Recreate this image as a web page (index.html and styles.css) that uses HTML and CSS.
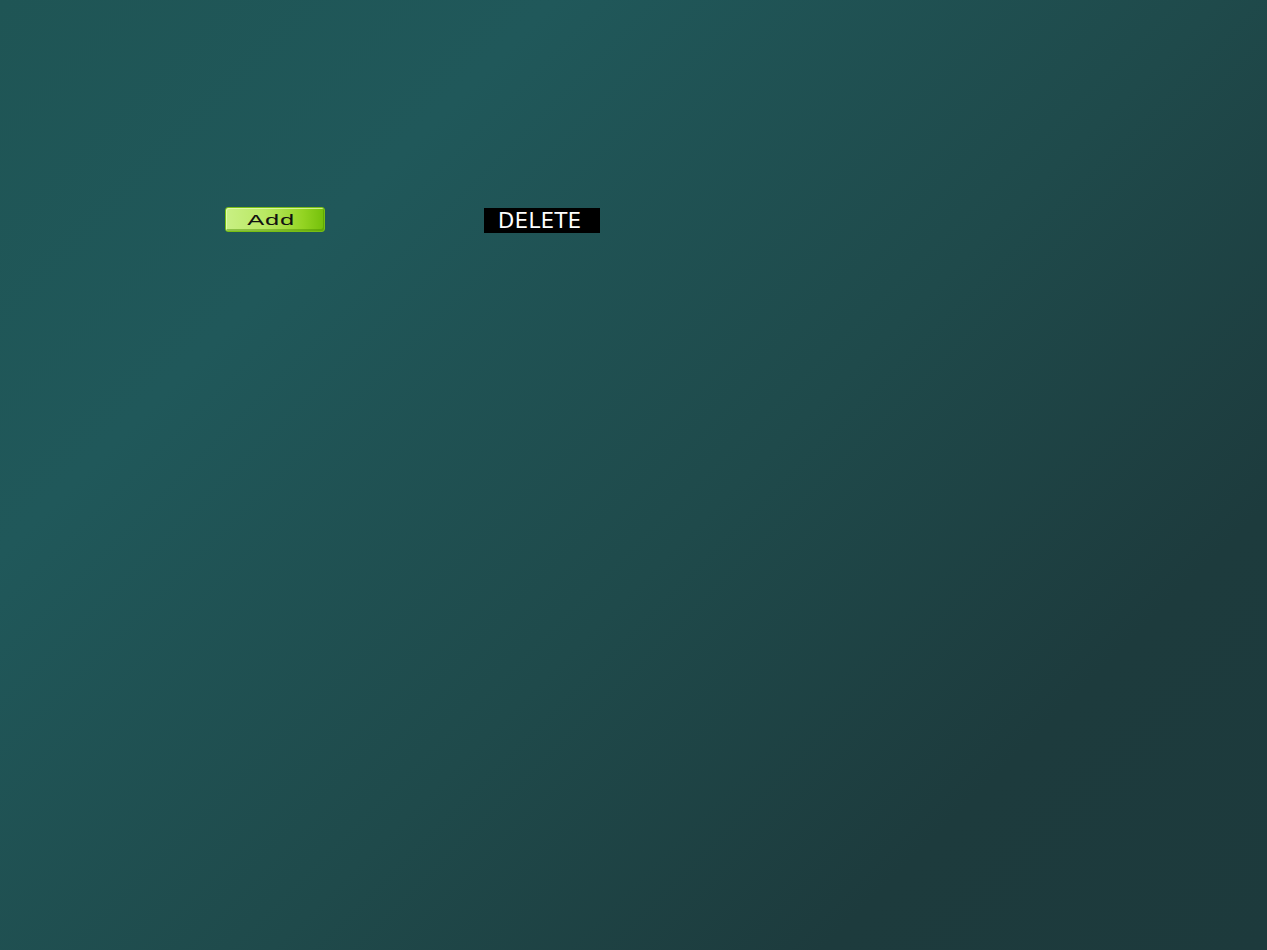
FILE: index.html
```html
<!DOCTYPE html>
<html>
<head>
<meta charset="utf-8">
<link rel="stylesheet" href="styles.css">
</head>
<body>
<div class="page">
  <div class="toolbar">
    <button class="btn-add"><span class="btn-add-label">Add</span></button>
    <button class="btn-delete">DELETE</button>
  </div>
</div>
</body>
</html>
```
FILE: styles.css
```css
html, body {
  margin: 0;
  padding: 0;
  height: 100%;
}
body {
  background: linear-gradient(135deg, #1f5555 0%, #20585a 25%, #1f4a4b 55%, #1d3b3d 80%, #1d3a3c 100%);
  font-family: "DejaVu Sans", sans-serif;
}
.page {
  min-height: 950px;
  padding: 207px 0 0 225px;
  box-sizing: border-box;
}
.toolbar {
  display: flex;
  align-items: flex-start;
  gap: 159px;
}
.btn-add {
  display: flex;
  align-items: center;
  justify-content: center;
  width: 100px;
  height: 25px;
  margin: 0;
  padding: 0 7px 0 0;
  border: 1px solid #78bf14;
  border-radius: 3px;
  background: linear-gradient(90deg, #c9f084 0%, #b9e863 40%, #94d423 78%, #74c00a 100%);
  box-shadow: inset 1px 1px 0 rgba(235,255,190,0.7), inset -1px -2px 0 rgba(70,140,0,0.45);
  color: #111;
}
.btn-add-label {
  display: inline-block;
  font-family: "Liberation Sans", Arial, sans-serif;
  font-size: 15px;
  letter-spacing: 0.5px;
  line-height: 15px;
  transform: scaleX(1.7);
}
.btn-delete {
  width: 116px;
  height: 25px;
  margin: 1px 0 0 0;
  padding: 2px 0 0 14px;
  border: 0;
  background: #000;
  color: #fff;
  text-align: left;
  font-family: "DejaVu Sans", sans-serif;
  font-size: 21px;
  letter-spacing: 0.5px;
  line-height: 23px;
}
```
